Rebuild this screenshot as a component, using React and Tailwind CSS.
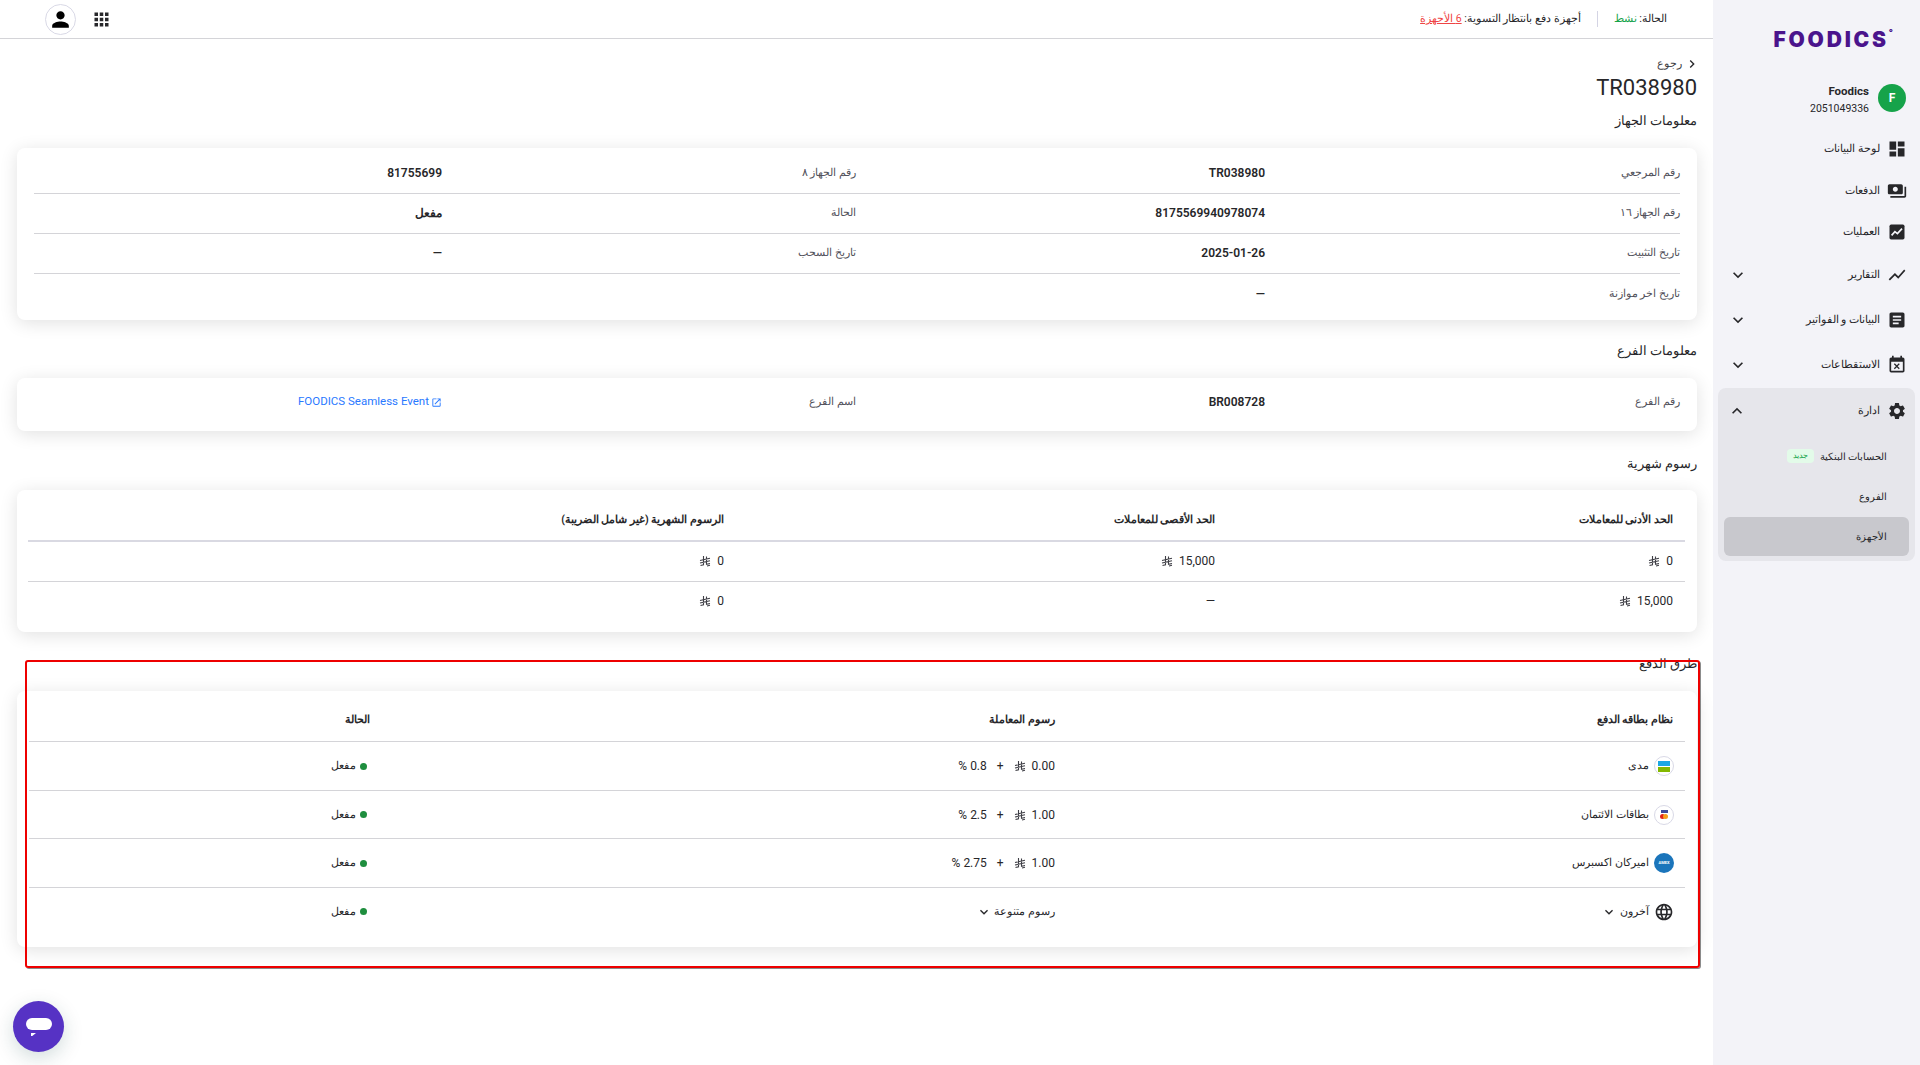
import {
  MdApps,
  MdDashboard,
  MdEventBusy,
  MdExpandLess,
  MdExpandMore,
  MdArticle,
  MdKeyboardArrowRight,
  MdLanguage,
  MdOpenInNew,
  MdPayments,
  MdPerson,
  MdSettings,
  MdShowChart,
} from 'react-icons/md';

const cardClass = 'bg-white rounded-lg shadow-[0_3px_18px_rgba(0,0,0,0.12)]';
const headingClass = 'h-6 leading-6 text-[13px] text-[#27272a]';
const infoCols = 'grid grid-cols-[415px_409px_414px_1fr] items-center';

function ChartBox({ className }) {
  return (
    <svg viewBox="0 0 24 24" className={className} fill="currentColor">
      <rect x="3" y="3" width="18" height="18" rx="2" />
      <path d="M5.5 16l4-4.5 3 2.5 5.5-6" fill="none" stroke="#f3f3f8" strokeWidth="2" />
    </svg>
  );
}

function Riyal() {
  return (
    <svg viewBox="0 0 24 24" className="w-[12px] h-[12px] shrink-0" fill="none" stroke="#3f3f46" strokeWidth="2.2">
      <path d="M9 2v17.5L3 21M15 3v15.5l7-1.6M2 11l20-4.5M2 16l20-4.5M16 22l6-1.4" />
    </svg>
  );
}

function Money({ value }) {
  return (
    <span className="inline-flex items-center gap-[6px]">
      <span>{value}</span>
      <Riyal />
    </span>
  );
}

function NavItem({ icon: Icon, label, open }) {
  return (
    <div className="flex items-center h-[41px] pr-[6px] pl-[9px]">
      <Icon className="w-[20px] h-[20px] text-[#27272a] shrink-0" />
      <span className="mr-[7px] text-[10.5px] text-[#27272a]">{label}</span>
      <span className="mr-auto">
        {open ? <MdExpandLess className="w-[20px] h-[20px] text-[#27272a]" /> : <MdExpandMore className="w-[20px] h-[20px] text-[#27272a]" />}
      </span>
    </div>
  );
}

function Sidebar() {
  return (
    <aside className="w-[207px] shrink-0 h-full bg-[#f3f3f8] pr-[6px] pl-[6px]">
      <div dir="ltr" className="pt-[26px] h-[78px] pr-[21px] flex justify-end">
        <span className="text-[#4a148c] font-black text-[21px] leading-[28px] tracking-[2.8px] font-[Inter,sans-serif]">
          FOODICS<span className="align-top text-[9px] leading-[14px] tracking-normal">°</span>
        </span>
      </div>
      <div className="flex items-center h-[40px] pr-[8px] mb-[11px]">
        <div className="w-[28px] h-[28px] rounded-full bg-[#16a34a] text-white text-[12px] font-bold flex items-center justify-center">F</div>
        <div className="mr-[9px] pt-[3px] text-[10.5px] leading-[17px] text-[#27272a]">
          <div className="font-bold text-[11.5px]">Foodics</div>
          <div>2051049336</div>
        </div>
      </div>
      <div className="flex items-center h-[42px] pr-[7px] -mt-[1px]">
        <MdDashboard className="w-[20px] h-[20px] text-[#27272a]" />
        <span className="mr-[7px] text-[10.5px] text-[#27272a]">لوحة البيانات</span>
      </div>
      <div className="flex items-center h-[41px] pr-[7px]">
        <MdPayments className="w-[20px] h-[20px] text-[#27272a]" />
        <span className="mr-[7px] text-[10.5px] text-[#27272a]">الدفعات</span>
      </div>
      <div className="flex items-center h-[42px] pr-[7px]">
        <ChartBox className="w-[20px] h-[20px] text-[#27272a]" />
        <span className="mr-[7px] text-[10.5px] text-[#27272a]">العمليات</span>
      </div>
      <div className="pt-[1px] pr-[1px]">
        <NavItem icon={MdShowChart} label="التقارير" open={false} />
      </div>
      <div className="pt-[4px] pr-[1px]">
        <NavItem icon={MdArticle} label="البيانات و الفواتير" open={false} />
      </div>
      <div className="pt-[4px] pr-[1px] pb-[3px]">
        <NavItem icon={MdEventBusy} label="الاستقطاعات" open={false} />
      </div>
      <div className="bg-[#e6e6eb] rounded-lg h-[173px] -ml-[1px] mr-[-1px]">
        <div className="pt-[2px] pr-[2px]">
          <NavItem icon={MdSettings} label="ادارة" open={true} />
        </div>
        <div className="flex items-center h-[40px] mt-[5px] pr-[28px] text-[10px] text-[#27272a]">
          الحسابات البنكية
          <span className="mr-[6px] bg-[#e3fbe9] text-[#16a34a] text-[8px] rounded h-[14px] px-[6px] flex items-center">جديد</span>
        </div>
        <div className="flex items-center h-[41px] pr-[28px] text-[10px] text-[#27272a]">الفروع</div>
        <div className="flex items-center h-[39px] mx-[6px] pr-[22px] rounded-md bg-[#c8c8cd] text-[10px] text-[#27272a]">الأجهزة</div>
      </div>
    </aside>
  );
}

function Header() {
  return (
    <header className="h-[39px] border-b border-[#d4d4d8] flex items-center pr-[46px] pl-[45px] text-[#27272a]">
      <span className="text-[11px]">
        الحالة: <span className="text-[#16a34a]">نشط</span>
      </span>
      <span className="w-px h-[16px] bg-[#d4d4e4] mx-[16px]" />
      <span className="text-[10.5px]">
        أجهزة دفع بانتظار التسوية: <span className="text-[#ef4444] underline">6 الأجهزة</span>
      </span>
      <div className="mr-auto flex items-center gap-[15px]">
        <MdApps className="w-[21px] h-[21px] text-[#27272a]" />
        <div className="w-[31px] h-[31px] rounded-full border border-[#d9d9e6] flex items-center justify-center">
          <MdPerson className="w-[25px] h-[25px] text-black" />
        </div>
      </div>
    </header>
  );
}

function InfoRow({ cells, last }) {
  return (
    <div className={`${infoCols} h-[40px] ${last ? '' : 'pb-[2px] border-b border-[#d4d4d8]'}`}>
      {cells.map((c, i) => (
        <div key={i} className={i % 2 ? 'text-[12px] font-semibold text-[#27272a]' : 'text-[10.5px] text-[#52525b]'}>
          {c}
        </div>
      ))}
    </div>
  );
}

function MonthlyFees() {
  const rows = [
    ['0', '15,000', '0'],
    ['15,000', null, '0'],
  ];
  return (
    <div className={`${cardClass} mt-[14px] h-[142px] pr-[12px] pl-[11px] pt-[8px]`}>
      <div className="grid grid-cols-[458px_491px_1fr] items-center h-[44px] pt-[2px] border-b-2 border-[#d9d9e2] text-[10.5px] font-bold text-[#27272a]">
        <div className="pr-3">الحد الأدنى للمعاملات</div>
        <div className="pr-3">الحد الأقصى للمعاملات</div>
        <div className="pr-3">الرسوم الشهرية (غير شامل الضريبة)</div>
      </div>
      {rows.map((r, i) => (
        <div key={i} className={`grid grid-cols-[458px_491px_1fr] items-center h-[40px] pb-[2px] text-[12px] text-[#27272a] ${i === 0 ? 'border-b border-[#d4d4d8]' : ''}`}>
          <div className="pr-3"><Money value={r[0]} /></div>
          <div className="pr-3">{r[1] ? <Money value={r[1]} /> : '—'}</div>
          <div className="pr-3"><Money value={r[2]} /></div>
        </div>
      ))}
    </div>
  );
}

function MadaIcon() {
  return (
    <span className="w-[20px] h-[20px] rounded-full border border-[#d9d9e6] flex flex-col items-center justify-center">
      <span className="w-[12px] h-[5px] bg-[#1ba7e3]" />
      <span className="w-[12px] h-[1px]" />
      <span className="w-[12px] h-[5px] bg-[#84b800]" />
    </span>
  );
}

function CardsIcon() {
  return (
    <span className="w-[20px] h-[20px] rounded-full border border-[#d9d9e6] flex flex-col items-center justify-center gap-[1px]">
      <span className="w-[7px] h-[3px] bg-[#3f4a9a]" />
      <span dir="ltr" className="flex">
        <span className="w-[5px] h-[5px] rounded-full bg-[#e2231a]" />
        <span className="w-[5px] h-[5px] rounded-full bg-[#f79e1b] -ml-[2px]" />
      </span>
    </span>
  );
}

function AmexIcon() {
  return (
    <span className="w-[20px] h-[20px] rounded-full bg-[#1b75bb] text-white text-[4px] font-bold flex items-center justify-center">AMEX</span>
  );
}

function PaymentMethods() {
  const rows = [
    { icon: <MadaIcon />, name: 'مدى', fixed: '0.00', pct: '0.8', h: 'h-[49px]' },
    { icon: <CardsIcon />, name: 'بطاقات الائتمان', fixed: '1.00', pct: '2.5', h: 'h-[48px]' },
    { icon: <AmexIcon />, name: 'اميركان اكسبرس', fixed: '1.00', pct: '2.75', h: 'h-[49px]' },
  ];
  const cols = 'grid grid-cols-[618px_685px_1fr] items-center';
  const status = (
    <div className="pr-[15px] flex items-center gap-[4px] text-[10.5px]">
      <span className="w-[7px] h-[7px] rounded-full bg-[#1e8e3e]" />
      <span>مفعل</span>
    </div>
  );
  return (
    <div className={`${cardClass} mt-[15px] h-[256px] px-3`}>
      <div className={`${cols} h-[51px] pt-[8px] border-b border-[#d4d4d8] text-[11px] font-bold text-[#27272a]`}>
        <div className="pr-3">نظام بطاقه الدفع</div>
        <div className="pr-3">رسوم المعاملة</div>
        <div className="pr-3">الحالة</div>
      </div>
      {rows.map((r) => (
        <div key={r.name} className={`${cols} ${r.h} border-b border-[#d4d4d8] text-[10.5px] text-[#27272a]`}>
          <div className="pr-[11px] flex items-center gap-[5px]">
            {r.icon}
            <span>{r.name}</span>
          </div>
          <div className="pr-3 flex items-center gap-[6px] text-[12px]">
            <Money value={r.fixed} />
            <span className="mx-[4px]">+</span>
            <span>{r.pct} %</span>
          </div>
          {status}
        </div>
      ))}
      <div className={`${cols} h-[49px] pb-[2px] text-[10.5px] text-[#27272a]`}>
        <div className="pr-[11px] flex items-center gap-[5px]">
          <MdLanguage className="w-[20px] h-[20px] text-[#27272a]" />
          <span>آخرون</span>
          <MdExpandMore className="w-[16px] h-[16px] -mr-[2px]" />
        </div>
        <div className="pr-3 flex items-center gap-[2px]">
          <span>رسوم متنوعة</span>
          <MdExpandMore className="w-[16px] h-[16px]" />
        </div>
        {status}
      </div>
    </div>
  );
}

export default function App() {
  return (
    <div dir="rtl" className="relative flex h-screen overflow-hidden bg-white font-[Roboto,'Noto_Sans',sans-serif]">
      <Sidebar />
      <div className="flex-1 min-w-0">
        <Header />
        <main className="pr-[16px] pl-[17px] pt-[17px]">
          <div className="flex items-center h-[16px] text-[10.5px] text-[#3f3f46]">
            <MdKeyboardArrowRight className="w-[16px] h-[16px] text-[#27272a] -mr-[3px]" />
            <span className="mr-[2px]">رجوع</span>
          </div>
          <h1 className="mt-[1px] h-[30px] leading-[30px] text-[22px] font-normal text-[#27272a]">TR038980</h1>
          <h2 className={`${headingClass} mt-[6px]`}>معلومات الجهاز</h2>

          <div className={`${cardClass} mt-[15px] h-[172px] px-[17px] pt-[6px]`}>
            <InfoRow cells={['رقم المرجعي', 'TR038980', 'رقم الجهاز ٨', '81755699']} />
            <InfoRow cells={['رقم الجهاز ١٦', '8175569940978074', 'الحالة', 'مفعل']} />
            <InfoRow cells={['تاريخ التثبيت', '2025-01-26', 'تاريخ السحب', '—']} />
            <InfoRow cells={['تاريخ اخر موازنة', '—', '', '']} last />
          </div>

          <h2 className={`${headingClass} mt-[19px]`}>معلومات الفرع</h2>
          <div className={`${cardClass} mt-[15px] h-[53px] px-[17px]`}>
            <div className={`${infoCols} h-[48px]`}>
              <div className="text-[10.5px] text-[#52525b]">رقم الفرع</div>
              <div className="text-[12px] font-semibold text-[#27272a]">BR008728</div>
              <div className="text-[10.5px] text-[#52525b]">اسم الفرع</div>
              <div className="text-[11.5px] text-[#2979ff] flex items-center gap-[2px]">
                <MdOpenInNew className="w-[11px] h-[11px]" />
                <span dir="ltr">FOODICS Seamless Event</span>
              </div>
            </div>
          </div>

          <h2 className={`${headingClass} mt-[21px]`}>رسوم شهرية</h2>
          <MonthlyFees />

          <h2 className={`${headingClass} mt-[20px]`}>طرق الدفع</h2>
          <PaymentMethods />
        </main>
      </div>

      {/* red annotation frame over the payment section */}
      <div className="absolute left-[25px] top-[660px] w-[1675px] h-[308px] border-2 border-[#ee0000] rounded-[3px] pointer-events-none shadow-[1px_1px_0_rgba(0,0,0,0.45)]" />

      <button className="absolute left-[13px] top-[1001px] w-[51px] h-[51px] rounded-full bg-[#5632c4] shadow-[0_6px_20px_rgba(0,60,60,0.18)] flex items-center justify-center">
        <svg viewBox="0 0 26 18" className="w-[26px] h-[18px]" fill="white">
          <rect x="0" y="0" width="26" height="12" rx="6" />
          <path d="M5 15h5l-5 4z" />
        </svg>
      </button>
    </div>
  );
}
